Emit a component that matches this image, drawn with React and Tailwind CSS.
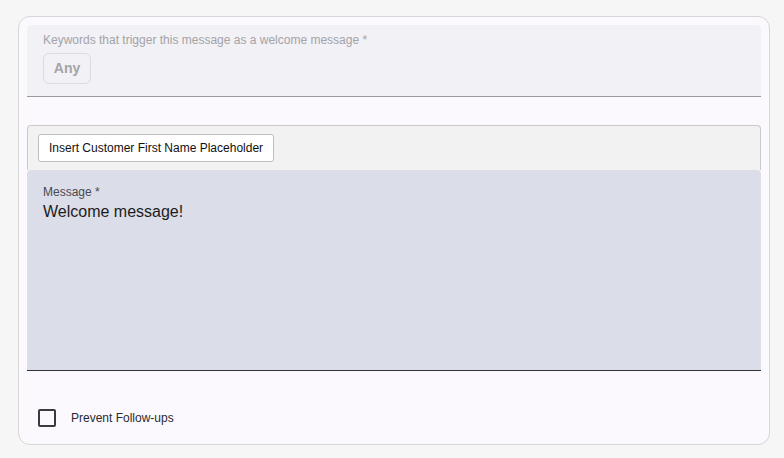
import React, { useState } from 'react';

function App() {
  const [prevent, setPrevent] = useState(false);

  return (
    <div className="h-[458px] w-[784px] bg-[#f6f6f7] pt-4 pl-[18px] pr-[14px] font-['Liberation_Sans',Arial,sans-serif]">
      <div className="h-[429px] rounded-xl border border-[#d6d6d8] bg-[#fbf9fe] pt-2 pl-2 pr-2">
        {/* keywords field */}
        <div className="h-[72px] rounded-t border-b border-[#9a9a9e] bg-[#f2f1f5] pl-4 pt-[7px]">
          <div className="text-[12px] leading-[16px] text-[#a3a3a8]">Keywords that trigger this message as a welcome message *</div>
          <div className="mt-[5px] flex">
            <span className="flex h-[31px] w-[48px] items-center justify-center rounded-md border border-[#dcdce0] text-[14px] font-bold text-[#a3a3a8]">Any</span>
          </div>
        </div>

        {/* message editor */}
        <div className="mt-7">
          <div className="h-[45px] rounded-t border border-b-0 border-[#c9c9cc] bg-[#f2f2f2] pl-[10px] pt-2">
            <button className="h-[28px] rounded-[3px] border border-[#bdbdc0] bg-white px-[10px] text-[12px] text-[#111]">
              Insert Customer First Name Placeholder
            </button>
          </div>
          <div className="h-[201px] rounded-t border-b border-[#333338] bg-[#dbdde8] pl-4 pt-[15px]">
            <div className="text-[12px] leading-[14px] text-[#4a4a50]">Message *</div>
            <div className="mt-[3px] text-[16px] leading-[20px] text-[#1c1c20]">Welcome message!</div>
          </div>
        </div>

        {/* checkbox */}
        <label className="mt-[38px] flex items-center pl-[11px]">
          <button
            onClick={() => setPrevent(!prevent)}
            className="h-[18px] w-[18px] rounded-[2px] border-2 border-[#3a3a3f] bg-transparent"
          />
          <span className="ml-[15px] text-[12px] text-[#2a2a2e]">Prevent Follow-ups</span>
        </label>
      </div>
    </div>
  );
}

export default App;
